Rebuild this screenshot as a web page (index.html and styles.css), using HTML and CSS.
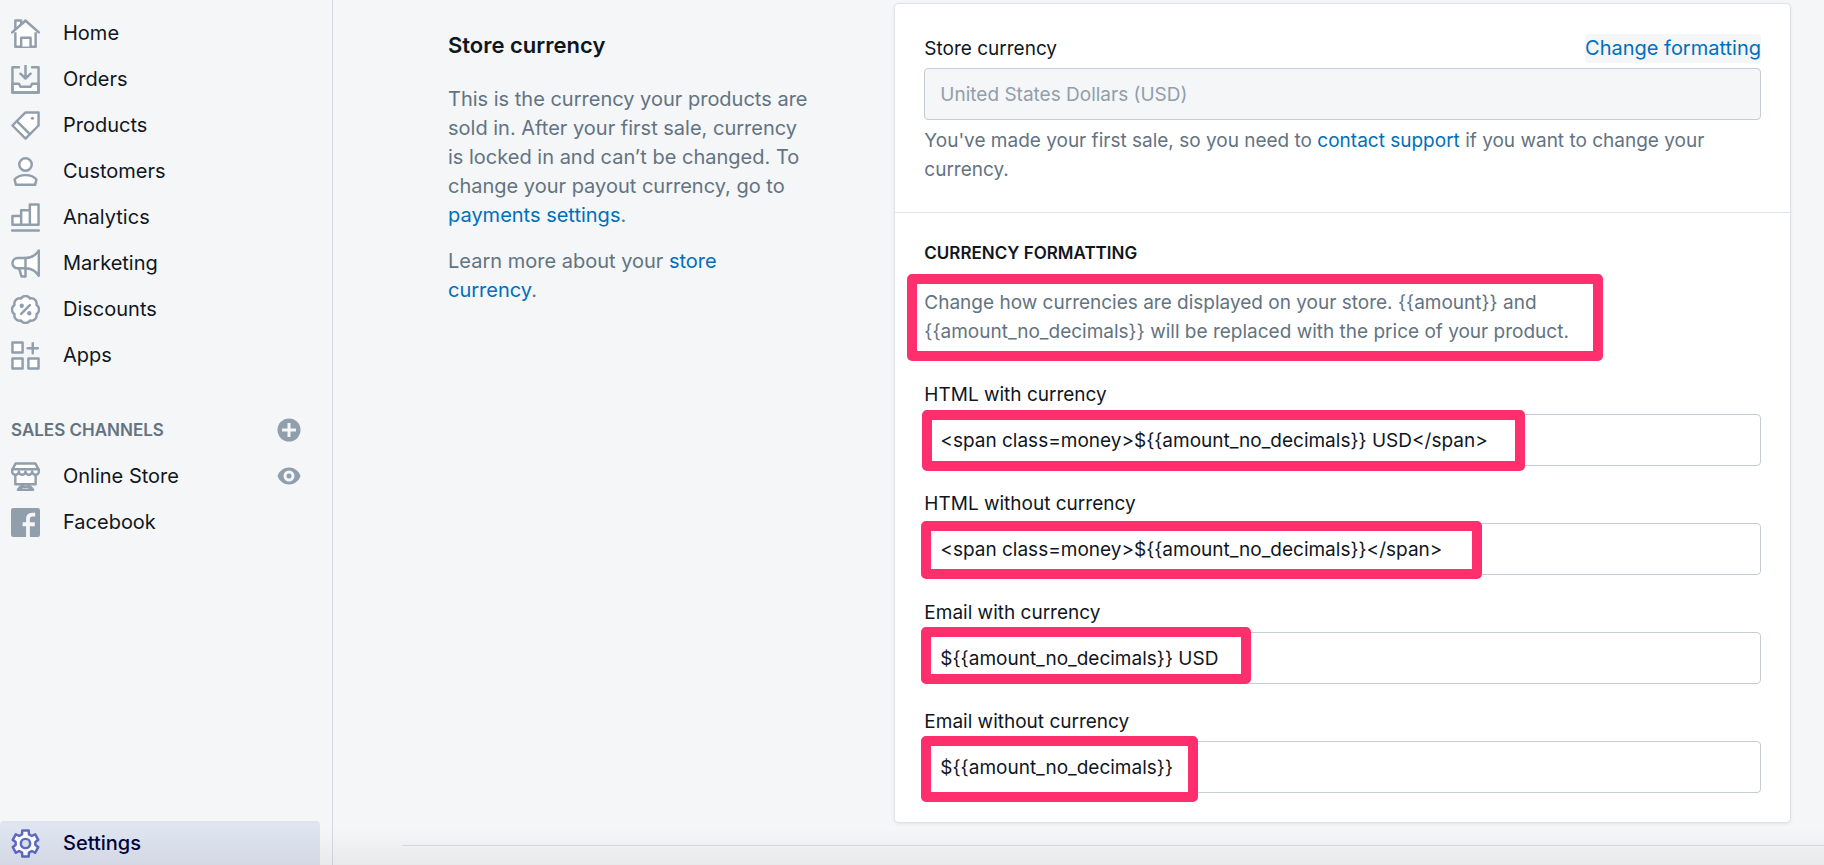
FILE: index.html
```
<!DOCTYPE html>
<html lang="en">
<head>
    <meta charset="UTF-8">
    <meta name="viewport" content="width=device-width, initial-scale=1.0">
    <title>Store currency - Settings</title>
    <link rel="stylesheet" href="styles.css">
</head>
<body>
    <div class="app">
        <nav class="sidebar">
            <a href="#" class="nav-item">
                <svg class="icon" viewBox="0 0 20 20"><path d="M3 8V1h4v4"/><path d="M3 8v11.200h14V8l-7-6.800z"/><path d="M.8 9.200L10 1.200l9.200 8"/><path d="M7 19v-6h6.500v6"/></svg>
                <span>Home</span>
            </a>
            <a href="#" class="nav-item">
                <svg class="icon" viewBox="0 0 20 20"><path class="solid" d="M1 13h4.500l1 2h7l1-2H19v6H1z"/><path class="line" d="M5.500 1.500H1V19h18V1.500h-4.500M10 .5v8.500M6.500 6L10 9.300 13.500 6"/></svg>
                <span>Orders</span>
            </a>
            <a href="#" class="nav-item">
                <svg class="icon" viewBox="0 0 20 20"><path d="M19 1h-9L1 10l9 9 9-9z"/><path d="M4 7l9 9"/><circle class="dot" cx="14.800" cy="5" r="1.100"/></svg>
                <span>Products</span>
            </a>
            <a href="#" class="nav-item">
                <svg class="icon" viewBox="0 0 20 20"><circle cx="10" cy="5.200" r="4.300"/><path d="M3.400 19.200l-.9-3.700c1.500-1.900 4.300-3 7.500-3s6 1.100 7.500 3l-.9 3.700z"/></svg>
                <span>Customers</span>
            </a>
            <a href="#" class="nav-item">
                <svg class="icon" viewBox="0 0 20 20"><path d="M1 9h6v6H1zM7 5h6v10H7zM13 1h6v14h-6z"/><path d="M.8 19h18.400"/></svg>
                <span>Analytics</span>
            </a>
            <a href="#" class="nav-item">
                <svg class="icon" viewBox="0 0 20 20"><path d="M5.500 13l1.800 6h2.700v-6"/><path d="M10 6.200c4 0 7-1.800 9.200-5.200v17.500c-2.200-3.400-5.200-5.200-9.200-5.200H4.600a3.550 3.550 0 0 1 0-7.100z"/><path d="M10 6.200v7.100"/></svg>
                <span>Marketing</span>
            </a>
            <a href="#" class="nav-item">
                <svg class="icon" viewBox="0 0 20 20"><path d="M6.860 2.420a3.700 3.700 0 0 1 6.280 0a3.700 3.700 0 0 1 4.440 4.440a3.700 3.700 0 0 1 0 6.280a3.700 3.700 0 0 1-4.440 4.440a3.700 3.700 0 0 1-6.280 0a3.700 3.700 0 0 1-4.440-4.440a3.700 3.700 0 0 1 0-6.280a3.700 3.700 0 0 1 4.440-4.440z"/><path d="M7 13l6-6"/><circle class="dot" cx="7.400" cy="7.400" r="1.500"/><circle class="dot" cx="12.600" cy="12.600" r="1.500"/></svg>
                <span>Discounts</span>
            </a>
            <a href="#" class="nav-item">
                <svg class="icon" viewBox="0 0 20 20"><path d="M1 1h7v7H1zM1 12h7v7H1zM12 12h7v7h-7z"/><path d="M15 1.500v7M11.500 5h7"/></svg>
                <span>Apps</span>
            </a>

            <div class="nav-heading">
                <h2>Sales channels</h2>
                <button type="button" class="icon-button" aria-label="Add sales channel">
                    <svg class="action-icon" viewBox="0 0 24 24"><circle class="action-shape" cx="12" cy="12" r="11.500"/><path class="action-line" d="M12 5v14M5 12h14"/></svg>
                </button>
            </div>
            <div class="nav-row">
                <a href="#" class="nav-item">
                    <svg class="icon" viewBox="0 0 20 20"><path d="M3 7v8.300h14V7"/><path d="M3.200 1h13.600l2.400 4.500v1a2.300 2.300 0 0 1-4.600 0a2.300 2.300 0 0 1-4.600 0a2.300 2.300 0 0 1-4.600 0a2.300 2.300 0 0 1-4.600 0v-1z"/><path d="M1 5h18M8 15.500l-1 2.500M12 15.500l1 2.500M4.800 19.200h10.400L13.500 17h-7z"/></svg>
                    <span>Online Store</span>
                </a>
                <button type="button" class="icon-button" aria-label="View your online store">
                    <svg class="action-icon" viewBox="0 0 24 24"><path class="action-shape" d="M.5 12C2.500 6.500 7 3.500 12 3.500s9.500 3 11.500 8.500c-2 5.500-6.500 8.500-11.500 8.500S2.500 17.500.5 12z"/><circle class="action-ring" cx="12" cy="12" r="4"/></svg>
                </button>
            </div>
            <a href="#" class="nav-item">
                <svg class="icon" viewBox="0 0 20 20"><rect class="dot" width="20" height="20" rx="1.500"/><path class="cutout" d="M11.700 20V7.500q0-3 3-3h2M8 11.200h8.400"/></svg>
                <span>Facebook</span>
            </a>

            <a href="#" class="nav-item nav-settings">
                <svg class="icon" viewBox="0 0 20 20"><path d="M7.800 1h4.400l.2 2.700 2 1.100 2.200-1.200 2.200 3.900-2 1.400v2.200l2 1.400-2.200 3.900-2.200-1.200-2 1.100-.2 2.700H7.800l-.2-2.700-2-1.100-2.200 1.200-2.200-3.900 2-1.400V8.900l-2-1.400 2.200-3.900 2.200 1.200 2-1.100z"/><circle class="hub" cx="10" cy="10" r="3.200"/></svg>
                <span>Settings</span>
            </a>
        </nav>

        <main class="content">
            <section class="settings-section">
                <div class="description">
                    <h2>Store currency</h2>
                    <p>This is the currency your products are sold in. After your first sale, currency is locked in and can’t be changed. To change your payout currency, go to <a href="#">payments settings</a>.</p>
                    <p>Learn more about your <a href="#">store currency</a>.</p>
                </div>

                <div class="card">
                    <div class="card-section">
                        <div class="label-row">
                            <label for="store-currency">Store currency</label>
                            <button type="button" class="link-button">Change formatting</button>
                        </div>
                        <input type="text" id="store-currency" value="United States Dollars (USD)" disabled>
                        <p class="help-text">You've made your first sale, so you need to <a href="#">contact support</a> if you want to change your currency.</p>
                    </div>

                    <div class="card-section">
                        <h3>Currency formatting</h3>
                        <div class="intro">
                            <p>Change how currencies are displayed on your store. {{amount}} and {{amount_no_decimals}} will be replaced with the price of your product.</p>
                            <span class="highlight highlight-intro"></span>
                        </div>

                        <div class="fields">
                            <div class="field">
                                <label for="html-with">HTML with currency</label>
                                <input type="text" id="html-with" value="&lt;span class=money&gt;${{amount_no_decimals}} USD&lt;/span&gt;">
                                <span class="highlight highlight-html-with"></span>
                            </div>
                            <div class="field">
                                <label for="html-without">HTML without currency</label>
                                <input type="text" id="html-without" value="&lt;span class=money&gt;${{amount_no_decimals}}&lt;/span&gt;">
                                <span class="highlight highlight-html-without"></span>
                            </div>
                            <div class="field">
                                <label for="email-with">Email with currency</label>
                                <input type="text" id="email-with" value="${{amount_no_decimals}} USD">
                                <span class="highlight highlight-email-with"></span>
                            </div>
                            <div class="field">
                                <label for="email-without">Email without currency</label>
                                <input type="text" id="email-without" value="${{amount_no_decimals}}">
                                <span class="highlight highlight-email-without"></span>
                            </div>
                        </div>
                    </div>
                </div>
            </section>
        </main>
    </div>
    <div class="bottom-shade"></div>
</body>
</html>
```
FILE: styles.css
```
* {
    box-sizing: border-box;
}

body {
    margin: 0;
    background-color: #f4f6f8;
    color: #10161d;
    font-family: Inter, "Liberation Sans", sans-serif;
    font-size: 19px;
    line-height: 29px;
}

h2,
h3,
p {
    margin: 0;
}

a {
    color: #006fbb;
    text-decoration: none;
}

a:hover {
    text-decoration: underline;
}

button {
    border: 0;
    padding: 0;
    background: none;
    font: inherit;
    cursor: pointer;
}

.app {
    display: flex;
    height: 100vh;
    overflow: hidden;
}

/* Sidebar */
.sidebar {
    display: flex;
    flex-direction: column;
    flex: 0 0 333px;
    padding-top: 10px;
    border-right: 1px solid #d5dae2;
    font-size: 20px;
}

.nav-item {
    display: flex;
    align-items: center;
    gap: 23px;
    height: 46px;
    padding-left: 11px;
    color: #10161d;
}

.icon {
    width: 29px;
    height: 29px;
    fill: #fff;
    stroke: #919eab;
    stroke-width: 1.7;
    stroke-linecap: round;
    stroke-linejoin: round;
}

.icon .line {
    fill: none;
}

.icon .dot {
    fill: #919eab;
    stroke: none;
}

.icon .cutout {
    fill: none;
    stroke: #f4f6f8;
    stroke-width: 2.6;
    stroke-linecap: butt;
}

.nav-heading,
.nav-row {
    display: flex;
    align-items: center;
    justify-content: space-between;
    height: 46px;
    padding-right: 31px;
}

.nav-heading {
    margin-top: 29px;
    padding-left: 11px;
}

.nav-heading h2 {
    color: #637381;
    font-size: 17px;
    font-weight: 600;
    text-transform: uppercase;
}

.icon-button {
    display: flex;
}

.action-icon {
    width: 24px;
    height: 24px;
}

.action-shape {
    fill: #919eab;
}

.action-line,
.action-ring {
    fill: none;
    stroke: #f4f6f8;
    stroke-width: 3;
}

.nav-settings {
    height: 44px;
    margin-top: auto;
    margin-right: 12px;
    border-radius: 4px 4px 0 0;
    background-color: #dfe4f1;
    color: #000639;
    font-weight: 500;
}

.nav-settings .icon {
    stroke: #5c6ac4;
}

.nav-settings .hub {
    fill: #dfe4f1;
}

/* Settings page */
.content {
    flex: 1;
    padding: 4px 0 0 69px;
}

.settings-section {
    display: grid;
    grid-template-columns: 1fr 2fr;
    padding: 0 34px 23px 46px;
    border-bottom: 1px solid #d9dee5;
}

.description {
    padding: 27px 85px 0 0;
    color: #637381;
    font-size: 20px;
}

.description h2 {
    color: #10161d;
    font-size: 22px;
    font-weight: 600;
}

.description p {
    margin-top: 17px;
}

.description h2 + p {
    margin-top: 25px;
}

.card {
    border-radius: 4px;
    background-color: #fff;
    box-shadow: 0 0 0 1px #dfe3e8, 0 1px 4px rgba(63, 63, 68, 0.15);
}

.card-section {
    padding: 30px 29px 28px;
}

.card-section + .card-section {
    padding: 28px 29px 29px;
    border-top: 1px solid #dfe3e8;
}

.label-row {
    display: flex;
    justify-content: space-between;
}

.link-button {
    border-radius: 4px;
    background-color: #f4f6f8;
    color: #006fbb;
    font-size: 20px;
}

label {
    display: block;
}

input {
    display: block;
    width: 100%;
    height: 52px;
    margin-top: 5px;
    padding: 0 15px;
    border: 1px solid #c4cdd5;
    border-radius: 4px;
    background-color: #fff;
    color: #10161d;
    font: inherit;
}

input:disabled {
    background-color: #f4f6f8;
    color: #919eab;
}

.help-text {
    margin-top: 6px;
    color: #637381;
}

.card-section h3 {
    font-size: 17px;
    font-weight: 600;
    line-height: 24px;
    text-transform: uppercase;
}

.intro {
    position: relative;
    margin-top: 23px;
    color: #637381;
}

.intro p {
    max-width: 668px;
}

.fields {
    display: grid;
    gap: 23px;
    margin-top: 34px;
}

.field {
    position: relative;
}

/* Marker boxes drawn over the text they point out */
.highlight {
    position: absolute;
    top: 32px;
    left: -3px;
    border: 10px solid #ff2f6d;
    border-radius: 5px;
    pointer-events: none;
}

.highlight-intro {
    top: -14px;
    left: -17px;
    width: 696px;
    height: 87px;
}

.highlight-html-with {
    top: 30px;
    left: -2px;
    width: 603px;
    height: 61px;
}

.highlight-html-without {
    width: 561px;
    height: 58px;
}

.highlight-email-with {
    top: 29px;
    width: 330px;
    height: 57px;
}

.highlight-email-without {
    top: 29px;
    width: 277px;
    height: 66px;
}

.bottom-shade {
    position: fixed;
    right: 0;
    bottom: 0;
    left: 0;
    height: 36px;
    background: linear-gradient(rgba(0, 0, 0, 0), rgba(0, 0, 0, 0.05));
    pointer-events: none;
}
```
